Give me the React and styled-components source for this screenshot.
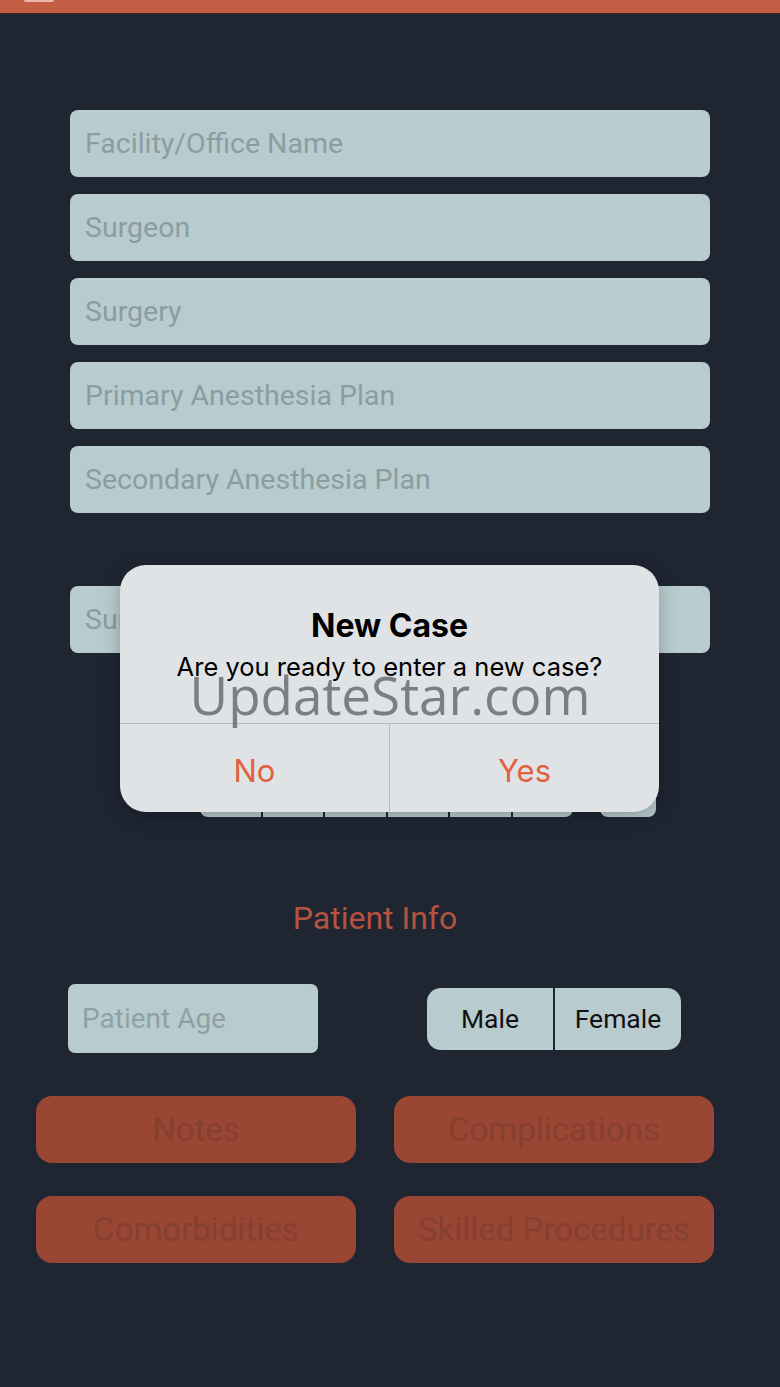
import React from 'react';
import styled, { createGlobalStyle } from 'styled-components';

const GlobalStyle = createGlobalStyle`
    html, body {
        margin: 0;
        padding: 0;
        background: #1f2632;
    }
    * {
        box-sizing: border-box;
    }
`;

const fields = [
    'Facility/Office Name',
    'Surgeon',
    'Surgery',
    'Primary Anesthesia Plan',
    'Secondary Anesthesia Plan',
];

const actions = ['Notes', 'Complications', 'Comorbidities', 'Skilled Procedures'];

function App() {
    return (
        <>
            <GlobalStyle />
            <Page>
                <TopBar>
                    <BarTab />
                </TopBar>
                <Form>
                    <Fields>
                        {fields.map((f) => (
                            <Field key={f}>{f}</Field>
                        ))}
                    </Fields>
                    <LastField>Surgery Date</LastField>
                    <PickerRow>
                        <Segments>
                            {[0, 1, 2, 3, 4, 5].map((i) => (
                                <Segment key={i} />
                            ))}
                        </Segments>
                        <Toggle />
                    </PickerRow>
                </Form>
                <SectionTitle>Patient Info</SectionTitle>
                <PatientRow>
                    <AgeField>Patient Age</AgeField>
                    <Gender>
                        <GenderOption>Male</GenderOption>
                        <GenderOption>Female</GenderOption>
                    </Gender>
                </PatientRow>
                <Actions>
                    {actions.map((a) => (
                        <ActionButton key={a}>{a}</ActionButton>
                    ))}
                </Actions>

                <Alert>
                    <AlertBody>
                        <AlertTitle>New Case</AlertTitle>
                        <AlertText>Are you ready to enter a new case?</AlertText>
                    </AlertBody>
                    <AlertButtons>
                        <AlertButton>No</AlertButton>
                        <AlertButton>Yes</AlertButton>
                    </AlertButtons>
                </Alert>
                <Watermark>UpdateStar.com</Watermark>
            </Page>
        </>
    );
}

export default App;

const Page = styled.div`
    position: relative;
    width: 780px;
    height: 1387px;
    background: #1f2632;
    font-family: Roboto, "Liberation Sans", sans-serif;
    overflow: hidden;
`;
const TopBar = styled.div`
    height: 14px;
    background: #c35e44;
    border-bottom: 1px solid #3a2a26;
    padding-left: 24px;
`;
const BarTab = styled.div`
    width: 30px;
    height: 2px;
    background: #e9b9a8;
    border-radius: 0 0 2px 2px;
`;
const Form = styled.div`
    padding: 96px 70px 0 70px;
`;
const Fields = styled.div`
    display: flex;
    flex-direction: column;
    gap: 17px;
`;
const Field = styled.div`
    height: 67px;
    background: #b8cbce;
    border-radius: 8px;
    display: flex;
    align-items: center;
    padding-left: 15px;
    font-size: 28.5px;
    color: #8a9ea1;
`;
const LastField = styled(Field)`
    margin-top: 73px;
`;
const PickerRow = styled.div`
    display: flex;
    align-items: flex-end;
    gap: 27px;
    margin-top: 106px;
    padding-left: 130px;
`;
const Segments = styled.div`
    display: flex;
    width: 373px;
    height: 58px;
    background: #b8cbce;
    border-radius: 8px;
    overflow: hidden;
`;
const Segment = styled.div`
    flex: 1;
    border-right: 2px solid #1f2632;
    &:last-child {
        border-right: none;
    }
`;
const Toggle = styled.div`
    width: 56px;
    height: 56px;
    border-radius: 8px;
    background: #b8cbce;
`;
const SectionTitle = styled.div`
    margin-top: 82px;
    text-align: center;
    padding-right: 30px;
    font-size: 32px;
    color: #b5533e;
    line-height: 38px;
`;
const PatientRow = styled.div`
    display: flex;
    align-items: center;
    justify-content: space-between;
    margin-top: 47px;
    padding: 0 99px 0 68px;
`;
const AgeField = styled.div`
    width: 250px;
    height: 69px;
    border-radius: 7px;
    background: #b8cbce;
    display: flex;
    align-items: center;
    padding-left: 14px;
    font-size: 28px;
    color: #8ea2a5;
`;
const Gender = styled.div`
    display: flex;
    width: 254px;
    height: 62px;
    border-radius: 14px;
    background: #b8cbce;
    overflow: hidden;
`;
const GenderOption = styled.div`
    flex: 1;
    display: flex;
    align-items: center;
    justify-content: center;
    font-size: 26.5px;
    color: #111;
    &:first-child {
        border-right: 2px solid #1f2632;
    }
`;
const Actions = styled.div`
    display: grid;
    grid-template-columns: 320px 320px;
    column-gap: 38px;
    row-gap: 33px;
    margin-top: 43px;
    padding-left: 36px;
`;
const ActionButton = styled.div`
    height: 67px;
    border-radius: 16px;
    background: #9a4634;
    display: flex;
    align-items: center;
    justify-content: center;
    font-size: 33px;
    color: #86402f;
`;
const Alert = styled.div`
    position: absolute;
    left: 120px;
    top: 565px;
    width: 539px;
    height: 247px;
    border-radius: 26px;
    background: #dfe3e6;
    box-shadow: 0 4px 18px rgba(0, 0, 0, 0.25);
    display: flex;
    flex-direction: column;
    font-family: Inter, "Liberation Sans", sans-serif;
    overflow: hidden;
`;
const AlertBody = styled.div`
    height: 159px;
    display: flex;
    flex-direction: column;
    align-items: center;
    padding-top: 42px;
    border-bottom: 1px solid #b9bdc1;
`;
const AlertTitle = styled.div`
    font-size: 32px;
    font-weight: 700;
    color: #000;
    line-height: 38px;
`;
const AlertText = styled.div`
    margin-top: 7px;
    font-size: 25.5px;
    color: #000;
    line-height: 30px;
`;
const AlertButtons = styled.div`
    flex: 1;
    display: flex;
`;
const AlertButton = styled.div`
    flex: 1;
    display: flex;
    align-items: center;
    justify-content: center;
    padding-top: 4px;
    font-size: 31px;
    color: #e2613f;
    &:first-child {
        border-right: 1px solid #b9bdc1;
    }
`;
const Watermark = styled.div`
    position: absolute;
    left: 0;
    right: 0;
    top: 660px;
    text-align: center;
    font-family: "Open Sans", "DejaVu Sans", sans-serif;
    font-size: 53px;
    line-height: 70px;
    color: rgba(85, 88, 92, 0.72);
    pointer-events: none;
`;
